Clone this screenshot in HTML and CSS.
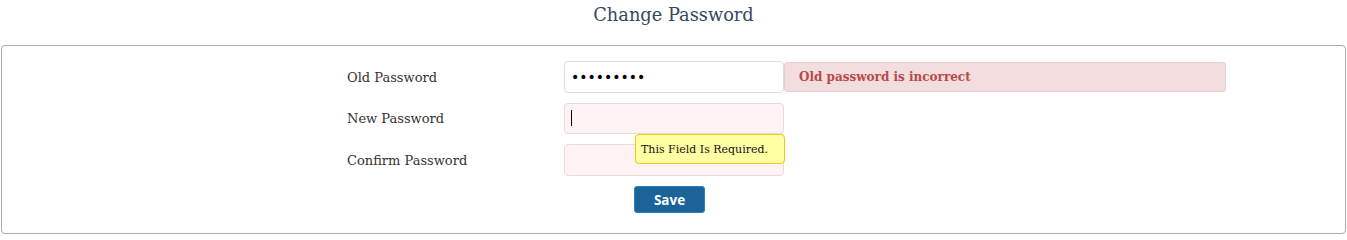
FILE: index.html
```html
<!DOCTYPE html>
<html>
<head>
<meta charset="utf-8">
<link rel="stylesheet" href="styles.css">
</head>
<body>
<h1 class="title">Change Password</h1>
<div class="panel">
  <form class="form">
    <div class="row">
      <label class="label">Old Password</label>
      <input class="input dots" type="password" value="123456789">
      <div class="error">Old password is incorrect</div>
    </div>
    <div class="row short">
      <label class="label">New Password</label>
      <div class="field">
        <input class="input invalid" type="text" value="">
        <span class="caret"></span>
        <div class="tooltip">This Field Is Required.</div>
      </div>
    </div>
    <div class="row">
      <label class="label">Confirm Password</label>
      <input class="input invalid" type="password" value="">
    </div>
    <div class="actions">
      <button class="save" type="button">Save</button>
    </div>
  </form>
</div>
</body>
</html>
```

FILE: styles.css
```css
html, body {
  margin: 0;
  padding: 0;
  background: #fff;
}
body {
  font-family: "DejaVu Serif", "Liberation Serif", serif;
  color: #333;
}
.title {
  margin: 0;
  height: 45px;
  padding-top: 4px;
  box-sizing: border-box;
  text-align: center;
  font-weight: normal;
  font-size: 17.8px;
  color: #34495e;
}
.panel {
  margin: 0 1px;
  height: 189px;
  box-sizing: border-box;
  border: 1px solid #aaa;
  border-radius: 4px;
  padding: 15px 0 0 344px;
}
.form {
  display: flex;
  flex-direction: column;
  gap: 10px;
}
.row {
  display: flex;
  align-items: center;
  height: 32px;
}
.row.short {
  height: 31px;
}
.label {
  width: 218px;
  font-size: 13px;
  color: #333;
  padding-left: 1px;
  box-sizing: border-box;
}
.field {
  position: relative;
  width: 220px;
  height: 31px;
}
.input {
  width: 220px;
  height: 100%;
  box-sizing: border-box;
  border: 1px solid #ddd;
  border-radius: 4px;
  background: #fff;
  padding: 0 6px;
  font-size: 13px;
  font-family: "DejaVu Sans", sans-serif;
  outline: none;
  margin: 0;
}
.input.dots {
  font-size: 14px;
  color: #000;
}
.input.invalid {
  background: #fff3f3;
  border-color: #e6dcdc;
}
.caret {
  position: absolute;
  left: 7px;
  top: 7px;
  width: 1px;
  height: 16px;
  background: #000;
}
.error {
  width: 442px;
  height: 30px;
  box-sizing: border-box;
  background: #f2dede;
  border: 1px solid #ebccd1;
  border-radius: 3px;
  color: #b94a48;
  font-weight: bold;
  font-size: 12px;
  display: flex;
  align-items: center;
  padding-left: 14px;
}
.tooltip {
  position: absolute;
  left: 71px;
  top: 31px;
  width: 150px;
  height: 30px;
  box-sizing: border-box;
  background: #ffffa3;
  border: 1px solid #f5c518;
  border-radius: 4px;
  font-size: 11px;
  color: #111;
  display: flex;
  align-items: center;
  padding-left: 5px;
  white-space: nowrap;
  z-index: 2;
}
.actions {
  padding-left: 288px;
}
.save {
  width: 71px;
  height: 27px;
  background: #1b6499;
  border: 1px solid #2d80c0;
  border-radius: 3px;
  color: #fff;
  font-family: "Open Sans", "DejaVu Sans", sans-serif;
  font-weight: bold;
  font-size: 13.5px;
  padding: 0;
}
```
